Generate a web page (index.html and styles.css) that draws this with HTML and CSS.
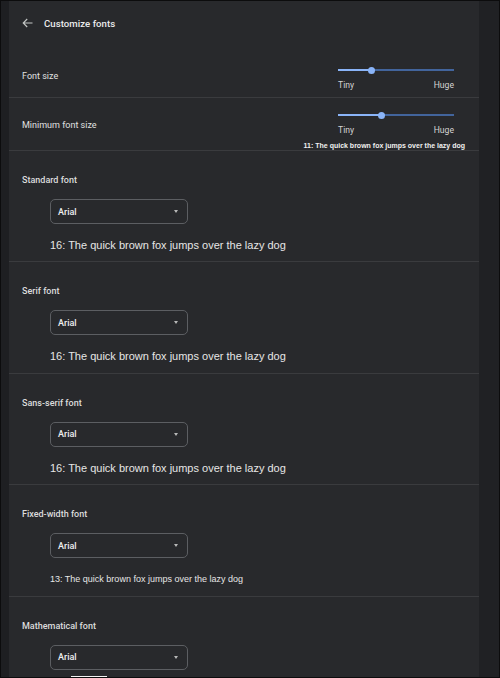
FILE: index.html
```html
<!DOCTYPE html>
<html>
<head>
<meta charset="utf-8">
<link rel="stylesheet" href="styles.css">
</head>
<body>
<div class="frame">
  <div class="strip-left"></div>
  <main class="panel">
    <header class="header">
      <svg class="back" width="11" height="10" viewBox="0 0 11 10"><path d="M10.5 5H1.2M5.2 1L1.2 5l4 4" fill="none" stroke="#c4c7c5" stroke-width="1.1"/></svg>
      <h1 class="title">Customize fonts</h1>
    </header>

    <section class="row row-size">
      <div class="row-label label-size">Font size</div>
      <div class="slider-block block-size">
        <div class="slider">
          <div class="track"><div class="fill" style="width:29%"></div></div>
          <div class="thumb" style="left:29%"></div>
        </div>
        <div class="ends"><span>Tiny</span><span>Huge</span></div>
      </div>
    </section>

    <section class="row row-min">
      <div class="row-label label-min">Minimum font size</div>
      <div class="slider-block block-min">
        <div class="slider">
          <div class="track"><div class="fill" style="width:37.3%"></div></div>
          <div class="thumb" style="left:37.3%"></div>
        </div>
        <div class="ends"><span>Tiny</span><span>Huge</span></div>
        <div class="min-sample">11: The quick brown fox jumps over the lazy dog</div>
      </div>
    </section>

    <section class="font-section">
      <div class="section-label">Standard font</div>
      <div class="select"><span>Arial</span><i class="caret"></i></div>
      <div class="sample">16: The quick brown fox jumps over the lazy dog</div>
    </section>

    <section class="font-section">
      <div class="section-label">Serif font</div>
      <div class="select"><span>Arial</span><i class="caret"></i></div>
      <div class="sample">16: The quick brown fox jumps over the lazy dog</div>
    </section>

    <section class="font-section">
      <div class="section-label">Sans-serif font</div>
      <div class="select"><span>Arial</span><i class="caret"></i></div>
      <div class="sample">16: The quick brown fox jumps over the lazy dog</div>
    </section>

    <section class="font-section">
      <div class="section-label">Fixed-width font</div>
      <div class="select"><span>Arial</span><i class="caret"></i></div>
      <div class="sample sample-small">13: The quick brown fox jumps over the lazy dog</div>
    </section>

    <section class="font-section">
      <div class="section-label">Mathematical font</div>
      <div class="select"><span>Arial</span><i class="caret"></i></div>
      <div class="math-bar"></div>
    </section>
  </main>
  <div class="strip-right"></div>
</div>
</body>
</html>
```

FILE: styles.css
```css
html, body {
  margin: 0;
  padding: 0;
  background: #202124;
}

body {
  font-family: Roboto, "Liberation Sans", sans-serif;
  color: #e3e3e3;
}

.frame {
  width: 500px;
  height: 678px;
  box-sizing: border-box;
  border: 1px solid #0c0c0d;
  display: flex;
  overflow: hidden;
  background: #202124;
}

.strip-left {
  width: 8px;
  flex: none;
  background: #1e1f22;
}

.panel {
  width: 470px;
  flex: none;
  background: #28292c;
}

.strip-right {
  flex: 1;
  background: #202124;
}

.header {
  height: 44px;
  display: flex;
  align-items: center;
  padding-left: 13px;
}

.back {
  display: block;
  margin-right: 11px;
}

.title {
  margin: 0;
  font-size: 9.6px;
  font-weight: 500;
  color: #ececec;
  letter-spacing: 0.05px;
}

.row {
  display: flex;
  justify-content: space-between;
  align-items: flex-start;
  padding: 0 14px 0 13px;
  border-bottom: 1px solid #3a3b3e;
  height: 52px;
}

.row-label {
  font-size: 9px;
  line-height: 12px;
  color: #e0e0e0;
}

.label-size { margin-top: 25px; }
.label-min { margin-top: 21px; }

.slider-block {
  display: flex;
  flex-direction: column;
  align-items: flex-end;
}

.block-size { padding-top: 18px; }
.block-min { padding-top: 10px; }

.slider {
  position: relative;
  width: 116px;
  height: 14px;
  margin-right: 11px;
  display: flex;
  align-items: center;
}

.track {
  width: 100%;
  height: 2px;
  background: #42649c;
}

.fill {
  height: 100%;
  background: #8ab4f8;
}

.thumb {
  position: absolute;
  top: 3.5px;
  width: 7px;
  height: 7px;
  margin-left: -3.5px;
  border-radius: 50%;
  background: #8ab4f8;
}

.ends {
  width: 116px;
  margin-right: 11px;
  margin-top: 2px;
  display: flex;
  justify-content: space-between;
  font-size: 8.6px;
  line-height: 12px;
  color: #d4d4d4;
}

.min-sample {
  margin-top: 6px;
  font-family: "Liberation Sans", Arial, sans-serif;
  font-size: 7px;
  font-weight: bold;
  line-height: 8px;
  color: #f0f0f0;
  white-space: nowrap;
}

.font-section {
  padding: 23px 14px 9.4px 13px;
  border-bottom: 1px solid #3a3b3e;
}

.section-label {
  font-size: 9px;
  font-weight: 500;
  line-height: 12px;
  color: #dcdcdc;
}

.select {
  margin: 13px 0 0 28px;
  width: 138px;
  height: 25px;
  box-sizing: border-box;
  border: 1px solid #5c5e62;
  border-radius: 5px;
  display: flex;
  align-items: center;
  justify-content: space-between;
  padding: 0 9px 0 7px;
  font-size: 9px;
  font-weight: 500;
  color: #efefef;
}

.caret {
  width: 0;
  height: 0;
  border-left: 2.5px solid transparent;
  border-right: 2.5px solid transparent;
  border-top: 3px solid #b8b8b8;
}

.sample {
  margin: 14px 0 0 28px;
  font-family: "Liberation Sans", Arial, sans-serif;
  font-size: 11px;
  line-height: 14px;
  color: #e6e6e6;
  white-space: nowrap;
}

.sample-small {
  font-size: 9px;
}

.math-bar {
  margin: 6px 0 0 49px;
  width: 36px;
  height: 3px;
  background: #f4f4f4;
}
```
